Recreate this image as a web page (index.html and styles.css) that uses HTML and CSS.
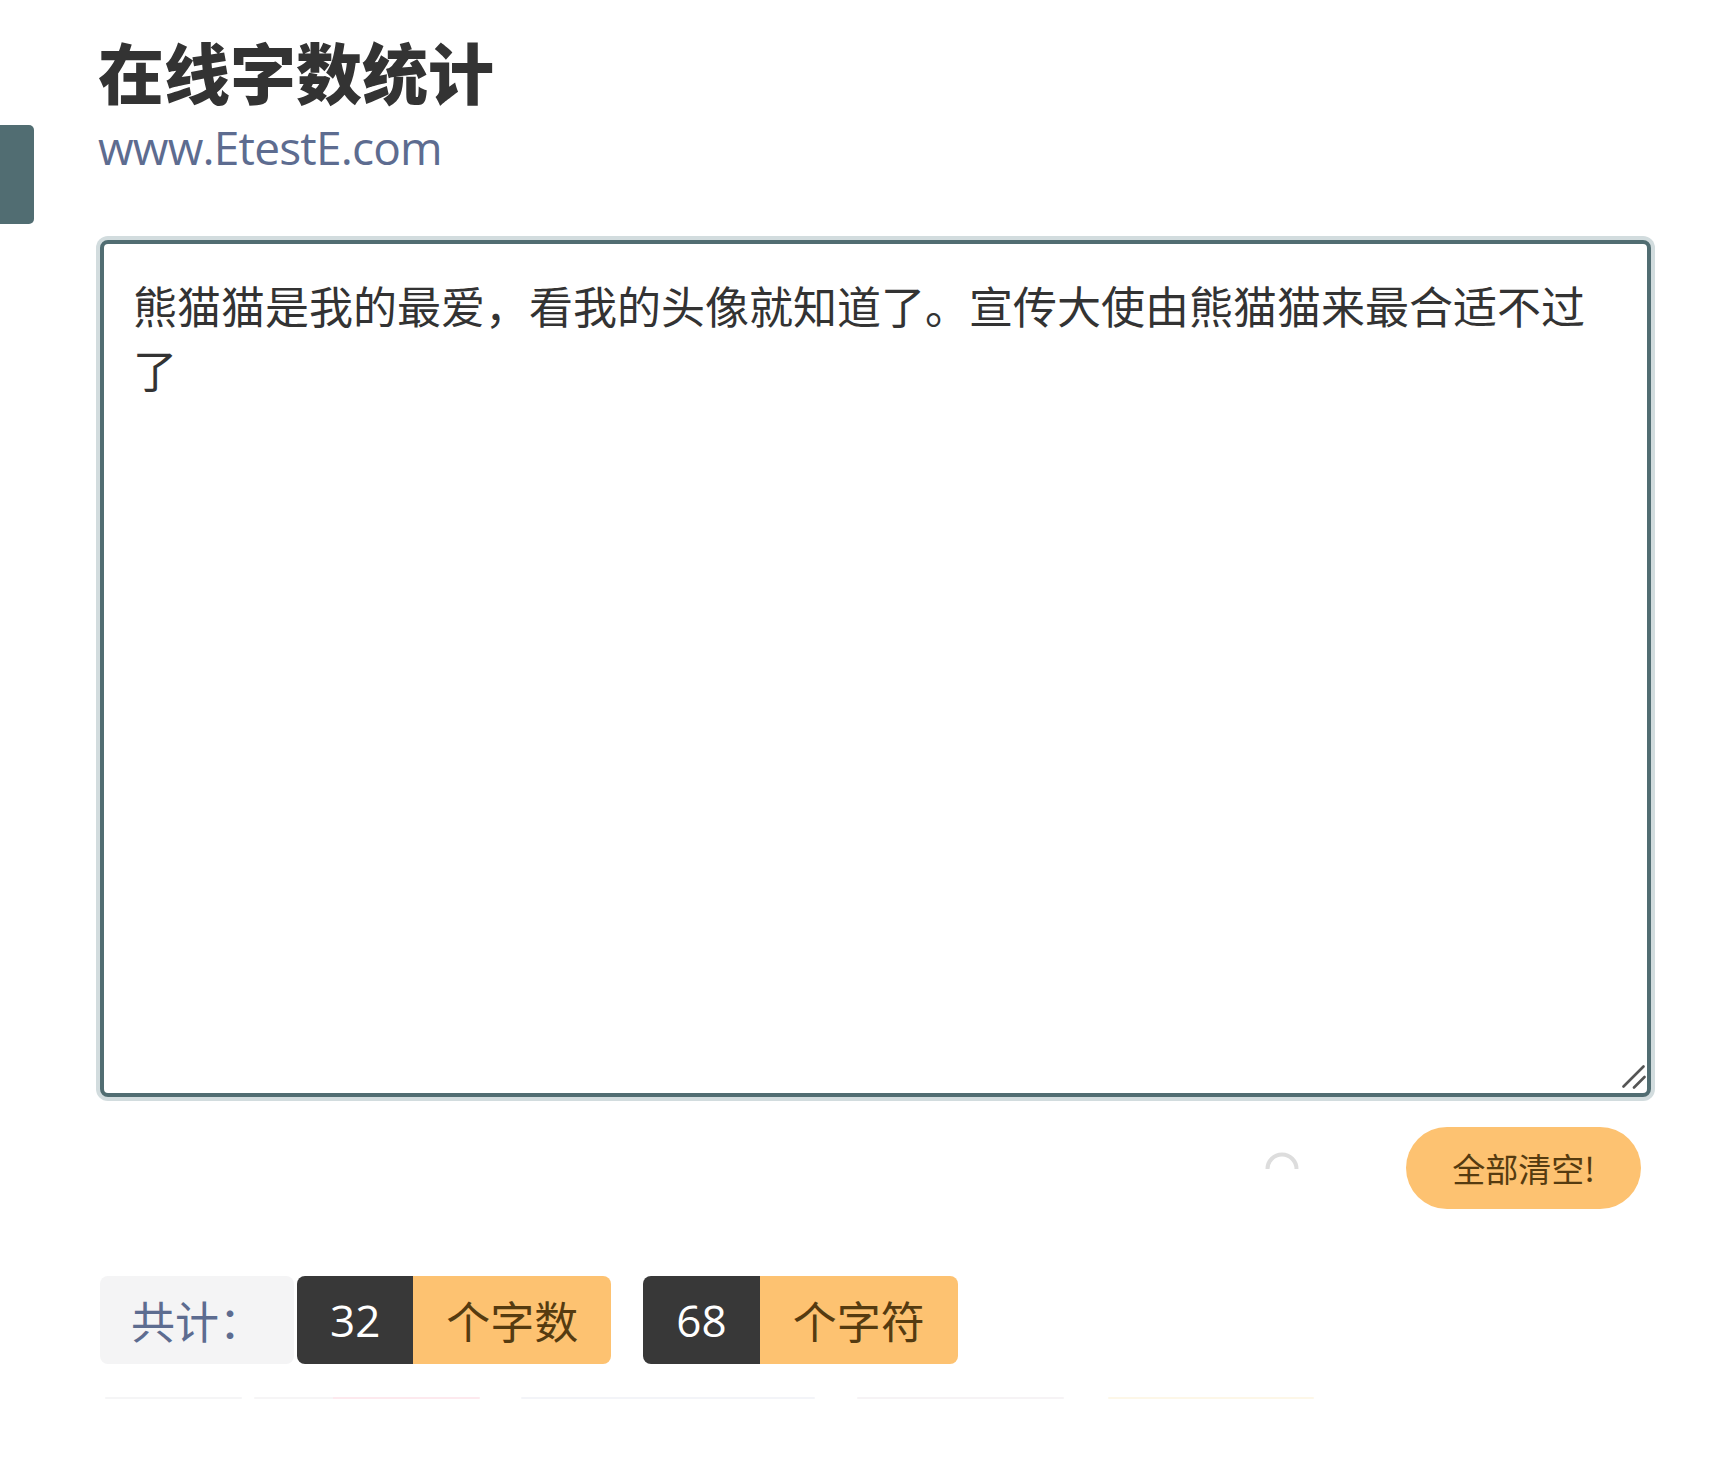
FILE: index.html
```html
<!DOCTYPE html>
<html lang="zh-CN">
<head>
    <meta charset="UTF-8">
    <meta name="viewport" content="width=device-width, initial-scale=1.0">
    <title>在线字数统计</title>
    <link rel="stylesheet" href="styles.css">
</head>
<body>
    <a class="side-tab" href="#" aria-label="菜单"></a>

    <main class="page">
        <header class="page-head">
            <h1>在线字数统计</h1>
            <p class="site">www.EtestE.com</p>
        </header>

        <div class="editor">
            <textarea id="source" class="source" spellcheck="false">熊猫猫是我的最爱，看我的头像就知道了。宣传大使由熊猫猫来最合适不过了</textarea>
            <svg class="grip" width="24" height="24" viewBox="0 0 24 24" aria-hidden="true">
                <path d="M1.5 21.5 L21.5 1.5 M12 22.5 L22.5 12" stroke="#555" stroke-width="2.6" stroke-linecap="round"/>
            </svg>
        </div>

        <div class="actions">
            <svg class="spinner" width="34" height="19" viewBox="0 0 34 19" aria-hidden="true">
                <path d="M2.5 18 A14.5 14.5 0 0 1 31.5 18" fill="none" stroke="#dddddd" stroke-width="4"/>
            </svg>
            <button id="clearBtn" class="clear-btn">全部清空!</button>
        </div>

        <div class="stats">
            <span class="total">共计：</span>
            <span class="count">
                <span class="num">32</span><span class="unit">个字数</span>
            </span>
            <span class="count">
                <span class="num">68</span><span class="unit">个字符</span>
            </span>
        </div>

        <div class="more">
            <span class="more-item m1"></span>
            <span class="more-item m2"></span>
            <span class="more-item m3"></span>
            <span class="more-item m4"></span>
            <span class="more-item m5"></span>
        </div>
    </main>
</body>
</html>
```

FILE: styles.css
```css
:root {
    --text-color: #333333;
    --slate: #5d6c90;
    --teal: #516d72;
    --ring: #d2dcde;
    --orange: #fdc271;
    --brown: #553b10;
    --dark: #383838;
    --light: #f4f4f5;
    --radius: 8px;
}

html, body {
    margin: 0;
    padding: 0;
    background: #fff;
}

body {
    font-family: "Open Sans", "Noto Sans CJK SC", sans-serif;
    color: var(--text-color);
}

.side-tab {
    position: absolute;
    left: 0;
    top: 125px;
    width: 34px;
    height: 99px;
    background-color: var(--teal);
    border-radius: 0 5px 5px 0;
}

.page {
    width: 1559px;
    margin-left: 96px;
    padding-top: 30px;
}

.page-head h1 {
    margin: 0 0 0 2px;
    font-family: "Noto Sans CJK SC", sans-serif;
    font-size: 66px;
    font-weight: 900;
    line-height: 80px;
    color: var(--text-color);
}

.site {
    margin: 9px 0 0 2px;
    font-family: "Open Sans", sans-serif;
    font-size: 46px;
    letter-spacing: -0.8px;
    line-height: 56px;
    color: var(--slate);
}

.editor {
    position: relative;
    width: 1551px;
    margin: 65px 4px 0;
}

.source {
    display: block;
    box-sizing: border-box;
    width: 100%;
    height: 857px;
    margin: 0;
    padding: 29px 30px 22px 29px;
    border: 4px solid var(--teal);
    border-radius: var(--radius);
    box-shadow: 0 0 0 4px var(--ring);
    outline: none;
    resize: none;
    font-family: "Noto Sans CJK SC", sans-serif;
    font-size: 44px;
    line-height: 64px;
    color: var(--text-color);
    background: #fff;
}

.grip {
    position: absolute;
    right: 5px;
    bottom: 8px;
}

.actions {
    display: flex;
    justify-content: flex-end;
    align-items: center;
    gap: 107px;
    margin-top: 30px;
    padding-right: 14px;
}

.spinner {
    display: block;
    margin-top: -16px;
}

.clear-btn {
    height: 82px;
    padding: 0 46px;
    border: none;
    border-radius: 41px;
    background-color: var(--orange);
    color: var(--brown);
    font-family: "Noto Sans CJK SC", sans-serif;
    font-size: 33px;
    cursor: pointer;
}

.stats {
    display: flex;
    align-items: stretch;
    height: 88px;
    margin-top: 67px;
    margin-left: 4px;
    font-family: "Open Sans", "Noto Sans CJK SC", sans-serif;
    font-size: 44px;
}

.stats > span {
    display: flex;
}

.total {
    align-items: center;
    padding: 0 31px;
    width: 132px;
    background-color: var(--light);
    border-radius: var(--radius);
    color: var(--slate);
    font-family: "Noto Sans CJK SC", sans-serif;
    margin-right: 3px;
}

.count + .count {
    margin-left: 32px;
}

.num, .unit {
    display: flex;
    align-items: center;
    padding: 0 33px;
}

.num {
    background-color: var(--dark);
    color: #fff;
    border-radius: var(--radius) 0 0 var(--radius);
}

.unit {
    background-color: var(--orange);
    color: var(--brown);
    font-family: "Noto Sans CJK SC", sans-serif;
    border-radius: 0 var(--radius) var(--radius) 0;
}

.more {
    display: flex;
    margin-top: 33px;
    height: 2px;
}

.more-item {
    display: block;
    height: 2px;
    border-radius: 2px;
}

.m1 { width: 137px; margin-left: 9px; background: #f5f5f6; }
.m2 { width: 226px; margin-left: 12px; background: linear-gradient(90deg, #f6f5f6 35%, #fde9ee 35%); }
.m3 { width: 294px; margin-left: 41px; background: #f3f4f8; }
.m4 { width: 207px; margin-left: 42px; background: #f6f3f5; }
.m5 { width: 206px; margin-left: 44px; background: #fdf7e8; }
```
